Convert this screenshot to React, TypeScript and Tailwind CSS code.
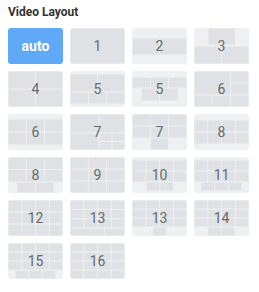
import React from "react";

type R = [number, number, number, number];

function grid(cols: number, rows: number, x0: number, y0: number, w: number, h: number): R[] {
  const out: R[] = [];
  const cw = w / cols;
  const ch = h / rows;
  for (let r = 0; r < rows; r++)
    for (let c = 0; c < cols; c++) out.push([x0 + c * cw, y0 + r * ch, cw, ch]);
  return out;
}

const W = 55;
const H = 36;
const t3 = W / 3;

const tiles: { label: string; rects: R[] }[] = [
  { label: "1", rects: [[0, 0, W, H]] },
  { label: "2", rects: grid(2, 1, 0, 10, W, 17) },
  { label: "3", rects: [[14, 0, 27.5, 17] as R, ...grid(2, 1, 0, 18, W, 18)] },
  { label: "4", rects: grid(2, 2, 0, 0, W, H) },
  { label: "5", rects: [...grid(2, 1, 0, 3, W, 18), ...grid(3, 1, 0, 21, W, 12)] },
  { label: "5", rects: [...grid(3, 1, 0, 6, W, 11), ...grid(2, 1, 9, 17, 37, 13)] },
  {
    label: "6",
    rects: [[0, 0, 2 * t3, 24] as R, ...grid(1, 3, 2 * t3, 0, t3, H), ...grid(2, 1, 0, 24, 2 * t3, 12)],
  },
  { label: "6", rects: grid(3, 2, 0, 5, W, 26) },
  {
    label: "7",
    rects: [
      [0, 0, 29, 19] as R,
      [29, 0, 26, 19] as R,
      [0, 19, 29, 17] as R,
      ...grid(2, 2, 29, 19, 26, 17),
    ],
  },
  { label: "7", rects: [...grid(3, 2, 0, 0, W, 24), [t3, 24, t3, 12] as R] },
  { label: "8", rects: grid(4, 2, 0, 6, W, 24) },
  { label: "8", rects: [...grid(3, 2, 0, 0, W, 25), ...grid(2, 1, 9, 25, 37, 11)] },
  { label: "9", rects: grid(3, 3, 0, 0, W, H) },
  { label: "10", rects: [...grid(4, 2, 0, 3, W, 22), ...grid(2, 1, 14, 25, 27.5, 9)] },
  { label: "11", rects: [...grid(4, 2, 0, 3, W, 22), ...grid(3, 1, 7, 25, 41, 9)] },
  { label: "12", rects: grid(4, 3, 0, 0, W, H) },
  { label: "13", rects: [...grid(4, 3, 0, 0, W, 28), [20.6, 28, 13.75, 8] as R, [0, 28, 20.6, 8] as R, [34.35, 28, 20.65, 8] as R] },
  { label: "13", rects: [...grid(4, 3, 0, 0, W, 27), [20.6, 27, 13.75, 9] as R] },
  { label: "14", rects: [...grid(4, 3, 0, 0, W, 27), ...grid(2, 1, 13.75, 27, 27.5, 9)] },
  { label: "15", rects: [...grid(4, 3, 0, 0, W, 27), ...grid(3, 1, 7, 27, 41, 9)] },
  { label: "16", rects: grid(4, 4, 0, 0, W, H) },
];

function Tile({ label, rects }: { label: string; rects: R[] }) {
  return (
    <div className="relative h-[36px] w-[55px] overflow-hidden rounded-[3px] bg-[#eef0f2]">
      <svg className="absolute inset-0" width="55" height="36" viewBox="0 0 55 36">
        {rects.map((r, i) => (
          <rect
            key={i}
            x={r[0] + 0.5}
            y={r[1] + 0.5}
            width={Math.max(0, r[2] - 1)}
            height={Math.max(0, r[3] - 1)}
            fill="#dfe1e4"
          />
        ))}
      </svg>
      <div className="relative flex h-full w-full items-center justify-center text-[14px] text-[#666a6e]">
        {label}
      </div>
    </div>
  );
}

export default function App() {
  return (
    <div
      className="h-[292px] w-[259px] bg-white px-[8px] pt-[4px]"
      style={{ fontFamily: "Roboto, 'Liberation Sans', sans-serif" }}
    >
      <div className="text-[12px] font-bold leading-[16px] text-[#333]">Video Layout</div>
      <div className="mt-[8px] grid grid-cols-[repeat(4,55px)] gap-x-[7px] gap-y-[7px]">
        <div className="flex h-[36px] w-[55px] items-center justify-center rounded-[3px] bg-[#5fa9f6] text-[14px] font-bold text-white">
          auto
        </div>
        {tiles.map((t, i) => (
          <Tile key={i} label={t.label} rects={t.rects} />
        ))}
      </div>
    </div>
  );
}
